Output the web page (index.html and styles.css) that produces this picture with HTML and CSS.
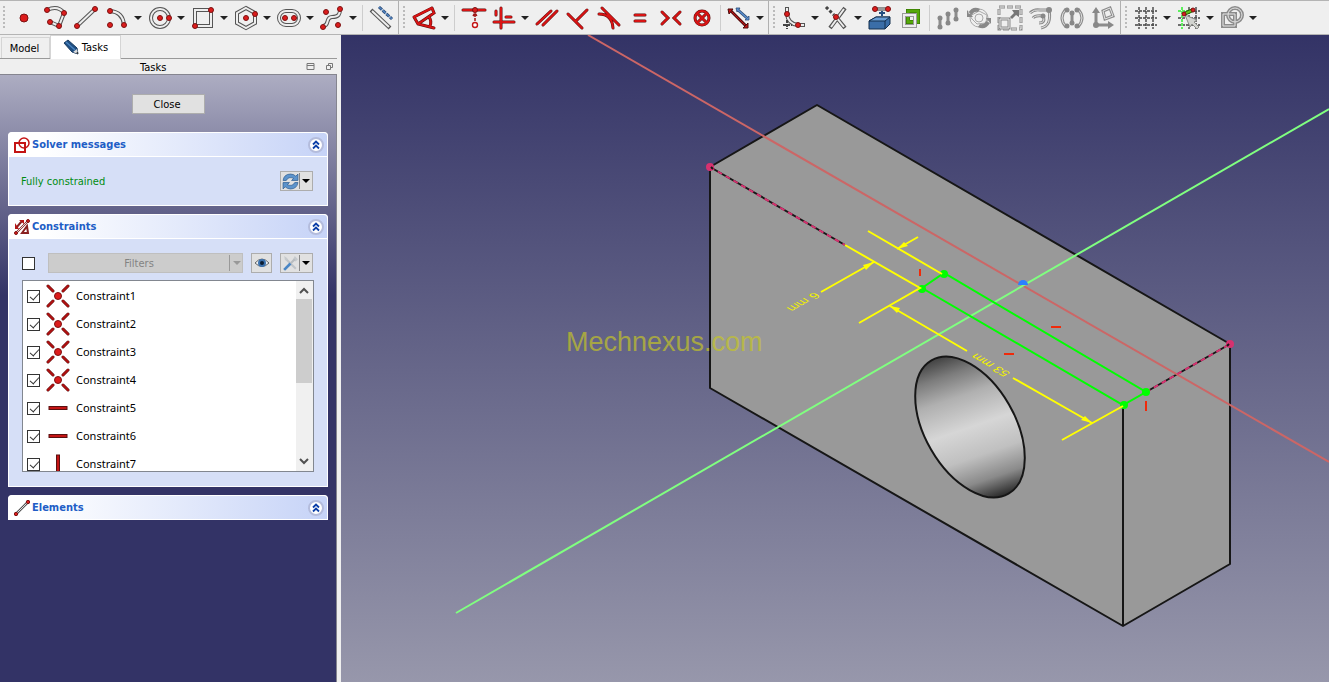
FILE: index.html
```
<!DOCTYPE html>
<html lang="en">
<head>
<meta charset="utf-8">
<title>Sketcher</title>
<link rel="stylesheet" href="styles.css">
</head>
<body>
<svg class="defs" aria-hidden="true">
  <defs>
    <symbol id="collapse" viewBox="0 0 16 16"><circle cx="8" cy="8" r="7" fill="#fff" stroke="#b4bcdc" stroke-width="2"/><path d="M5 7.500L8 4.500L11 7.500M5 11.500L8 8.500L11 11.500" fill="none" stroke="#0c3fa8" stroke-width="1.800"/></symbol>
    <symbol id="coincident" viewBox="0 0 24 24"><g class="k3"><path d="M2 2L7 7M22 2L17 7M2 22L7 17M22 22L17 17"/></g><g class="r2 deep"><path d="M2 2L7 7M22 2L17 7M2 22L7 17M22 22L17 17"/></g><circle class="dot" cx="12" cy="12" r="3.500"/></symbol>
    <symbol id="horizontal" viewBox="0 0 24 24"><rect x="3" y="10.500" width="18" height="3" fill="#c41414" stroke="#5b1010"/></symbol>
    <symbol id="vertical" viewBox="0 0 24 24"><rect x="10.500" y="3" width="3" height="18" fill="#c41414" stroke="#5b1010"/></symbol>
    <symbol id="grid-lines" viewBox="0 0 24 24"><path d="M5 1V23M12 1V23M19 1V23M1 5H23M1 12H23M1 19H23" fill="none" stroke="#444" stroke-width="1.400" stroke-dasharray="3 1"/></symbol>
  </defs>
</svg>
<div class="app">
  <header class="toolbars">
    <div class="bar" role="toolbar" aria-label="Geometries">
      <span class="grip"></span>
      <button class="tool" aria-label="Point"><svg viewBox="0 0 24 24"><circle class="dot" cx="12" cy="12" r="4"/></svg></button>
      <button class="tool" aria-label="Polyline"><svg viewBox="0 0 24 24"><path class="k4" d="M4 4Q15 -1 21 7L16 20L7 16"/><path class="w2" d="M4 4Q15 -1 21 7L16 20L7 16"/><g class="dot"><circle cx="4" cy="4" r="2.500"/><circle cx="21" cy="7" r="2.500"/><circle cx="16" cy="20" r="2.500"/><circle cx="7" cy="16" r="2.500"/></g></svg></button>
      <button class="tool" aria-label="Line"><svg viewBox="0 0 24 24"><path class="k4" d="M3 20L21 3"/><path class="w2" d="M3 20L21 3"/><g class="dot"><circle cx="3" cy="20" r="2.500"/><circle cx="21" cy="3" r="2.500"/></g></svg></button>
      <button class="tool drop" aria-label="Arc"><svg viewBox="0 0 24 24"><path class="k4" d="M5 5Q18 6 19 19"/><path class="w2" d="M5 5Q18 6 19 19"/><g class="dot"><circle cx="5" cy="5" r="2.500"/><circle cx="19" cy="19" r="2.500"/><circle cx="5" cy="19" r="2.500"/></g></svg></button>
      <button class="tool drop" aria-label="Circle"><svg viewBox="0 0 24 24"><circle class="k4" cx="12" cy="12" r="9"/><circle class="w2" cx="12" cy="12" r="9"/><g class="dot"><circle cx="12" cy="12" r="2.500"/><circle cx="21" cy="12" r="2.500"/></g></svg></button>
      <button class="tool drop" aria-label="Rectangle"><svg viewBox="0 0 24 24"><path class="k4" d="M4 4H20V20H4Z"/><path class="w2" d="M4 4H20V20H4Z"/><g class="dot"><circle cx="20" cy="4" r="2.500"/><circle cx="4" cy="20" r="2.500"/></g></svg></button>
      <button class="tool drop" aria-label="Polygon"><svg viewBox="0 0 24 24"><path class="k4" d="M12 2L21 7V17L12 22L3 17V7Z"/><path class="w2" d="M12 2L21 7V17L12 22L3 17V7Z"/><g class="dot"><circle cx="12" cy="12" r="2.500"/><circle cx="21" cy="8" r="2.500"/></g></svg></button>
      <button class="tool drop" aria-label="Slot"><svg viewBox="0 0 24 24"><rect class="k4" x="2" y="5" width="20" height="14" rx="7"/><rect class="w2" x="2" y="5" width="20" height="14" rx="7"/><g class="dot"><circle cx="8" cy="12" r="2.500"/><circle cx="17" cy="12" r="2.500"/></g></svg></button>
      <button class="tool drop" aria-label="B-spline"><svg viewBox="0 0 24 24"><path class="k4" d="M3 20C10 20 5 11 12 11S20 8 20 3"/><path class="w2" d="M3 20C10 20 5 11 12 11S20 8 20 3"/><g class="dot"><circle cx="6" cy="6" r="2.500"/><circle cx="20" cy="3" r="2.500"/><circle cx="3" cy="21" r="2.500"/><circle cx="18" cy="19" r="2.500"/></g></svg></button>
      <span class="sep"></span>
      <button class="tool" aria-label="Toggle construction"><svg viewBox="0 0 24 24"><path class="k4" d="M2 4L21 22"/><path class="w2" d="M3 5L20 21"/><path d="M10 1L23 13" fill="none" stroke="#2c4a74" stroke-width="3" stroke-dasharray="4 1"/><path d="M10 1L23 13" fill="none" stroke="#4f81bd" stroke-width="1.500" stroke-dasharray="4 1"/></svg></button>
    </div>
    <div class="bar" role="toolbar" aria-label="Constraints">
      <span class="grip"></span>
      <button class="tool drop" aria-label="Dimension"><svg viewBox="0 0 24 24"><g class="k3"><path d="M2 11L20 2M2 11L6 18L22 22M20 2L22 7L6 18M17 11Q20 15 18 20"/></g><g class="r2"><path d="M2 11L20 2M2 11L6 18L22 22M20 2L22 7L6 18M17 11Q20 15 18 20"/></g></svg></button>
      <span class="sep"></span>
      <button class="tool" aria-label="Lock"><svg viewBox="0 0 24 24"><path class="k3" d="M2 4H24"/><path class="r2" d="M2 4H24"/><circle class="dot" cx="14" cy="4" r="2.500"/><path d="M14 8V15M12 10L14 7L16 10" fill="none" stroke="#a01515" stroke-dasharray="3 1" stroke-width="1.500"/><circle cx="14" cy="19" r="2.500" fill="#fff" stroke="#c41414" stroke-width="1.400"/></svg></button>
      <button class="tool drop" aria-label="Horizontal or vertical"><svg viewBox="0 0 24 24"><g class="k3"><path d="M9 2V22M2 16H22M4 5V9M14 11H19"/></g><g class="r2"><path d="M9 2V22M2 16H22M4 5V9M14 11H19"/></g></svg></button>
      <button class="tool" aria-label="Parallel"><svg viewBox="0 0 24 24"><g class="k3"><path d="M2 18L16 5M8 19L22 5"/></g><g class="r2"><path d="M2 18L16 5M8 19L22 5"/></g></svg></button>
      <button class="tool" aria-label="Perpendicular"><svg viewBox="0 0 24 24"><g class="k3"><path d="M2 8L16 22M10 15L21 4"/></g><g class="r2"><path d="M2 8L16 22M10 15L21 4"/></g></svg></button>
      <button class="tool" aria-label="Tangent"><svg viewBox="0 0 24 24"><g class="k3"><path d="M5 2L22 19M2 8Q15 8 16 22"/></g><g class="r2"><path d="M5 2L22 19M2 8Q15 8 16 22"/></g></svg></button>
      <button class="tool" aria-label="Equal"><svg viewBox="0 0 24 24"><g class="k3"><path d="M7 9H17M7 15H17"/></g><g class="r2"><path d="M7 9H17M7 15H17"/></g></svg></button>
      <button class="tool" aria-label="Symmetric"><svg viewBox="0 0 24 24"><g class="k3"><path d="M3 6L9 12L3 18M21 6L15 12L21 18"/></g><g class="r2"><path d="M3 6L9 12L3 18M21 6L15 12L21 18"/></g></svg></button>
      <button class="tool" aria-label="Block"><svg viewBox="0 0 24 24"><g class="k3"><circle cx="12" cy="12" r="7"/><path d="M8 8L16 16M16 8L8 16"/></g><g class="r2"><circle cx="12" cy="12" r="7"/><path d="M8 8L16 16M16 8L8 16"/></g></svg></button>
      <span class="sep"></span>
      <button class="tool drop" aria-label="Toggle driving"><svg viewBox="0 0 24 24"><path d="M3 4L20 21" stroke="#5a0c0c" stroke-width="3"/><path d="M3 4L20 21" stroke="#c41414"/><path d="M1 3H6L2 8ZM21 22V17L16 22Z" fill="#c41414" stroke="#4a0c0c"/><path d="M11 4L20 12" fill="none" stroke="#2c4a74" stroke-width="3"/><path d="M9 2H13L10 6ZM22 14V10L18 14Z" fill="#5b92d4" stroke="#2c4a74" stroke-width=".8"/><path d="M11 4L20 12" fill="none" stroke="#5b92d4" stroke-width="1.200"/></svg></button>
    </div>
    <div class="bar" role="toolbar" aria-label="Sketch tools">
      <span class="grip"></span>
      <button class="tool drop" aria-label="Fillet"><svg viewBox="0 0 24 24"><path class="k4" d="M5 1V8Q6 18 16 19H23"/><path class="w2" d="M5 2V8Q6 18 16 19H22"/><path d="M5 14V23M1 19H10" stroke="#444" stroke-width="2" stroke-dasharray="3 1"/><g class="dot"><circle cx="5" cy="8" r="2.500"/><circle cx="16" cy="19" r="2.500"/></g></svg></button>
      <button class="tool drop" aria-label="Trim"><svg viewBox="0 0 24 24"><g class="k4"><path d="M20 2L5 22M11 11L20 22"/></g><g class="w2"><path d="M19 3L6 21M11 11L19 21"/></g><path d="M1 1L9 9" stroke="#444" stroke-width="3" stroke-dasharray="3 2"/><circle class="dot" cx="11" cy="11" r="2.500"/></svg></button>
      <button class="tool" aria-label="External geometry"><svg viewBox="0 0 24 24"><path d="M1 15L8 11H22V18L17 23H1Z" fill="#3a6ea8" stroke="#15304f"/><path d="M1 15L8 11H22L17 15Z" fill="#6a9fd6" stroke="#15304f"/><path d="M17 15V23" stroke="#15304f"/><path d="M7 3H20" stroke="#333" stroke-width="3"/><path d="M7 3H20" stroke="#fff"/><path d="M14 5V10M11 7H17" stroke="#244f80" stroke-width="2"/><g class="dot"><circle cx="7" cy="3" r="2.500"/><circle cx="20" cy="3" r="2.500"/></g></svg></button>
      <button class="tool" aria-label="Carbon copy"><svg viewBox="0 0 24 24"><path d="M9 5H19V16H9Z" fill="none" stroke="#2e6800" stroke-width="4"/><path d="M9 5H19V16H9Z" fill="none" stroke="#55a80a" stroke-width="3"/><path d="M5 9H16V20H5Z" fill="none" stroke="#999" stroke-width="4"/><path d="M5 9H16V20H5Z" fill="none" stroke="#eee" stroke-width="2"/></svg></button>
      <span class="sep"></span>
      <button class="tool" aria-label="Move" disabled><svg viewBox="0 0 24 24"><g class="g3"><path d="M4 11V20M12 7V16M20 3V12"/></g><g class="gd"><circle cx="4" cy="12" r="2.500"/><circle cx="4" cy="21" r="2.500"/><circle cx="12" cy="8" r="2.500"/><circle cx="12" cy="17" r="2.500"/><circle cx="20" cy="4" r="2.500"/><circle cx="20" cy="13" r="2.500"/></g></svg></button>
      <button class="tool" aria-label="Rotate" disabled><svg viewBox="0 0 24 24"><g class="g1"><circle cx="12" cy="12" r="9"/><circle cx="12" cy="12" r="4"/><path d="M3 10L12 5L20 9L19 17L10 18L5 13Z"/></g><path d="M1 7Q6 -1 13 3L11 6Q7 5 5 9ZM23 17Q18 25 11 21L13 18Q17 19 19 15ZM19 12H24V18ZM0 4V11H6Z" fill="#888"/></svg></button>
      <button class="tool" aria-label="Scale" disabled><svg viewBox="0 0 24 24"><path d="M1 1H23V23H1Z" fill="none" stroke="#8c8c8c" stroke-width="3" stroke-dasharray="6 2"/><path d="M1 1H23V23H1Z" fill="none" stroke="#efefef" stroke-dasharray="5 3" stroke-dashoffset="-.5"/><path class="g3" d="M2 13H11V22H2Z"/><path class="gl" d="M2 13H11V22H2Z"/><path d="M12 11L16 7L14 4H21V11L18 9L14 13Z" fill="#777"/></svg></button>
      <button class="tool" aria-label="Offset" disabled><svg viewBox="0 0 24 24"><g class="g3"><path d="M1 7Q5 3 11 4H20Q23 20 12 22M4 12Q6 9 14 10Q17 17 10 17"/></g><g class="gl"><path d="M1 7Q5 3 11 4H20Q23 20 12 22M4 12Q6 9 14 10Q17 17 10 17"/></g><g class="gd"><circle cx="20" cy="4" r="3"/><circle cx="14" cy="10" r="2.500"/></g></svg></button>
      <button class="tool" aria-label="Symmetry" disabled><svg viewBox="0 0 24 24"><g class="g3"><path d="M6 3Q-2 12 6 21M18 3Q26 12 18 21M12 5V18"/></g><g class="gl"><path d="M6 3Q-2 12 6 21M18 3Q26 12 18 21"/></g><g class="gd"><circle cx="7" cy="4" r="2.500"/><circle cx="7" cy="20" r="2.500"/><circle cx="17" cy="4" r="2.500"/><circle cx="17" cy="20" r="2.500"/><circle cx="12" cy="7" r="2.500"/><circle cx="12" cy="17" r="2.500"/></g></svg></button>
      <button class="tool" aria-label="Remove alignment" disabled><svg viewBox="0 0 24 24"><path class="g3" d="M5 5V19H19"/><path d="M5 1L9 7H1ZM23 19L17 15V23Z" fill="#888"/><circle class="gd" cx="5" cy="19" r="3"/><path class="g3" d="M12 5L19 2L22 10L14 13Z"/><path class="gl" d="M12 5L19 2L22 10L14 13Z"/></svg></button>
    </div>
    <div class="bar last" role="toolbar" aria-label="Edit tools">
      <span class="grip"></span>
      <button class="tool drop" aria-label="Grid"><svg viewBox="0 0 24 24"><use href="#grid-lines"/></svg></button>
      <button class="tool drop" aria-label="Snap"><svg viewBox="0 0 24 24"><use href="#grid-lines"/><path d="M5 1V23M1 5H10" stroke="#5df05d" stroke-width="2" stroke-dasharray="3 1"/><path d="M7 8L16 4" stroke="#1f5f00" stroke-width="4"/><path d="M7 8L16 4" stroke="#62c31c" stroke-width="2"/><path d="M8 9L20 14L17 16L22 21L20 23L15 18L13 21Z" fill="#d2d4d0" stroke="#8b8d88"/><g class="dot"><circle cx="7" cy="8" r="2"/><circle cx="16" cy="4" r="2"/></g></svg></button>
      <button class="tool drop" aria-label="Rendering order"><svg viewBox="0 0 24 24"><g class="g4"><path d="M3 8H15V20H3Z"/><circle cx="15" cy="9" r="7"/></g><g class="gl"><path d="M3 8H15V20H3Z"/><circle cx="15" cy="9" r="7"/></g></svg></button>
    </div>
  </header>
  <div class="workspace">
    <aside class="side">
      <div class="tabs" role="tablist">
        <button class="tab" role="tab" aria-selected="false">Model</button>
        <button class="tab active" role="tab" aria-selected="true"><svg class="pencil" viewBox="0 0 16 16"><path d="M1 4L5 1L14 9L15 15L9 13Z" fill="#1f4e82" stroke="#173b62"/><path d="M3 3L12 11" stroke="#4a84c0" stroke-width="1.500"/><path d="M10 13L14 10L15 15Z" fill="#ddd"/><path d="M13 14L15 13V15Z" fill="#111"/></svg>Tasks</button>
      </div>
      <div class="dock-title"><h1>Tasks</h1>
        <div class="dock-buttons">
          <button aria-label="Shade"><svg viewBox="0 0 9 9"><path d="M1 1.500H8V7.500H1ZM1 3.500H8" fill="none" stroke="#777"/></svg></button>
          <button aria-label="Float"><svg viewBox="0 0 9 9"><path d="M3.500 3V1.500H7.500V5.500H6M1.500 3.500H5.500V7.500H1.500Z" fill="none" stroke="#777"/></svg></button>
        </div>
      </div>
      <div class="tasks">
        <button class="close">Close</button>
        <section class="box">
          <h2><svg viewBox="0 0 16 16"><path d="M1 6H11V15H1Z" fill="none" stroke="#c41414" stroke-width="2"/><circle cx="10" cy="6" r="5" fill="none" stroke="#c41414" stroke-width="1.500"/></svg>Solver messages<button class="fold" aria-label="Collapse"><svg><use href="#collapse"/></svg></button></h2>
          <div class="body solver">
            <p>Fully constrained</p>
            <button class="split" aria-label="Refresh"><svg viewBox="0 0 16 16"><path d="M1 7Q2 1 8 1Q11 1 13 3L15 1V7H9L11 5Q6 3 4 7ZM15 9Q14 15 8 15Q5 15 3 13L1 15V9H7L5 11Q10 13 12 9Z" fill="#5d94cc" stroke="#2f5f92" stroke-width=".7"/></svg><i></i></button>
          </div>
        </section>
        <section class="box">
          <h2><svg viewBox="0 0 16 16"><path d="M2 9L8 2M2 14L14 2M8 14L13 7L14 14Z" fill="none" stroke="#8a2020" stroke-width="2"/><path d="M2 14L14 2" fill="none" stroke="#ddd"/><path d="M1 4V10H5ZM5 1H10V5Z" fill="#b31515"/><circle class="dot" cx="2" cy="14" r="1.500"/><circle class="dot" cx="14" cy="2" r="1.500"/></svg>Constraints<button class="fold" aria-label="Collapse"><svg><use href="#collapse"/></svg></button></h2>
          <div class="body">
            <div class="filter-row">
              <input type="checkbox" class="check" aria-label="Enable filters">
              <button class="filters" disabled><span>Filters</span><i></i></button>
              <button class="eye" aria-label="Show or hide"><svg viewBox="0 0 16 16"><path d="M1 8Q8 0 15 8Q8 15 1 8Z" fill="#eef2f6" stroke="#666"/><circle cx="8" cy="8" r="4" fill="#3d72ad"/><circle cx="8" cy="8" r="2" fill="#0c1c30"/></svg></button>
              <button class="split" aria-label="Settings"><svg viewBox="0 0 16 16"><path d="M3 3L13 13" stroke="#c0c4c8" stroke-width="2"/><path d="M2 1L5 3V5L3 5ZM12 1L10 5L13 6L15 4" fill="#c5c9cc"/><path d="M12 4L8 8" stroke="#b8bcc0" stroke-width="2"/><path d="M2 14L8 8" stroke="#4a86c5" stroke-width="2.500"/></svg><i></i></button>
            </div>
            <div class="list">
              <ul>
                <li><label><input type="checkbox" class="check" checked><svg><use href="#coincident"/></svg>Constraint1</label></li>
                <li><label><input type="checkbox" class="check" checked><svg><use href="#coincident"/></svg>Constraint2</label></li>
                <li><label><input type="checkbox" class="check" checked><svg><use href="#coincident"/></svg>Constraint3</label></li>
                <li><label><input type="checkbox" class="check" checked><svg><use href="#coincident"/></svg>Constraint4</label></li>
                <li><label><input type="checkbox" class="check" checked><svg><use href="#horizontal"/></svg>Constraint5</label></li>
                <li><label><input type="checkbox" class="check" checked><svg><use href="#horizontal"/></svg>Constraint6</label></li>
                <li><label><input type="checkbox" class="check" checked><svg><use href="#vertical"/></svg>Constraint7</label></li>
              </ul>
              <div class="scroll" aria-hidden="true">
                <svg viewBox="0 0 16 17"><path d="M4 11L8 7L12 11" fill="none" stroke="#505050" stroke-width="2"/></svg>
                <span class="thumb"></span>
                <svg viewBox="0 0 16 17"><path d="M4 6L8 10L12 6" fill="none" stroke="#505050" stroke-width="2"/></svg>
              </div>
            </div>
          </div>
        </section>
        <section class="box">
          <h2><svg viewBox="0 0 16 16"><path d="M2 14L14 2" stroke="#555" stroke-width="2.500"/><path d="M2 14L14 2" stroke="#ddd"/><circle class="dot" cx="2" cy="14" r="1.700"/><circle class="dot" cx="14" cy="2" r="1.700"/></svg>Elements<button class="fold" aria-label="Collapse"><svg><use href="#collapse"/></svg></button></h2>
        </section>
      </div>
    </aside>
    <main class="view">
      <svg viewBox="341 35 988 647" preserveAspectRatio="xMidYMid slice" role="img" aria-label="Block with a sketch on its top face">
        <defs>
          <linearGradient id="bore" gradientUnits="userSpaceOnUse" x1="944" y1="358" x2="992" y2="498" gradientTransform="rotate(-60 970 427)">
            <stop offset="0" stop-color="#484848"/><stop offset=".12" stop-color="#7c7c7c"/><stop offset=".28" stop-color="#b0b0b0"/><stop offset=".5" stop-color="#d6d6d6"/><stop offset=".7" stop-color="#c0c0c0"/><stop offset=".87" stop-color="#8a8a8a"/><stop offset="1" stop-color="#303030"/>
          </linearGradient>
        </defs>
        <path d="M817 105L1230 344V564L1123 626L710 388V167Z" fill="#999"/>
        <g class="edge">
          <path d="M710 167L817 105L1230 344V564L1123 626L710 388V167L845 245M1123 405V626M1146 392L1230 344"/>
          <ellipse cx="970" cy="427" rx="77" ry="45" transform="rotate(60 970 427)" fill="url(#bore)"/>
        </g>
        <path d="M588 35L1329 462" stroke="#cc6666" stroke-width="2"/>
        <path d="M456 613L1329 109" stroke="#80ff80" stroke-width="2"/>
        <path d="M710 167L845 245M1146 392L1230 344" stroke="#d6316f" stroke-width="2" stroke-dasharray="5 4"/>
        <path d="M1018 285A5 5 0 0 1 1028 285Z" fill="#2b80ff"/>
        <circle cx="710" cy="167" r="4" fill="#d6316f"/><circle cx="1230" cy="344" r="4" fill="#d6316f"/>
        <path d="M711 167L713 169M1229 344L1227 346" stroke="#161616" stroke-width="2"/>
        <path d="M922 288L944 273L1146 392L1123 405Z" fill="none" stroke="#0f0" stroke-width="2"/>
        <g fill="#0f0"><circle cx="922" cy="289" r="4"/><circle cx="944" cy="274" r="4"/><circle cx="1146" cy="392" r="4"/><circle cx="1124" cy="405" r="4"/></g>
        <g fill="none" stroke="#ff0" stroke-width="2">
          <path d="M845 245L920 288L859 323M868 231L942 274M918 237L897 249M821 292L874 262M890 306L967 351M1013 378L1092 423M1123 406L1062 440"/>
        </g>
        <path d="M897 249L904 242L908 246ZM874 262L863 265L866 270ZM890 306L897 313L900 308ZM1092 423L1085 416L1081 420Z" fill="#ff0"/>
        <path d="M920 269V276M1051 327H1061M1004 354H1014M1146 401V411" stroke="#f02a0a" stroke-width="2"/>
        <text class="dim" transform="matrix(-.87 .5 -.8 -.46 814 292)">6 mm</text>
        <text class="dim" transform="matrix(-.87 -.5 .8 -.46 1011 373)">53 mm</text>
        <text class="mark" x="566" y="351">Mechnexus.com</text>
      </svg>
    </main>
  </div>
</div>
</body>
</html>
```
FILE: styles.css
```
* { box-sizing: border-box; }
body { margin: 0; font: 11px/14px "DejaVu Sans Condensed", "Noto Sans", sans-serif; color: #000; background: #efefef; }
button { font: inherit; color: inherit; margin: 0; padding: 0; border: 0; background: none; }
.defs { position: absolute; width: 0; height: 0; }
.app { display: flex; flex-direction: column; height: 100vh; overflow: hidden; }

/* toolbars */
.toolbars { display: flex; height: 35px; flex: none; border-top: 1px solid #b4b4b4; border-bottom: 1px solid #b4b4b4; background: #efefef; }
.bar { display: flex; align-items: center; padding-right: 2px; border-right: 1px solid #b0b0b0; }
.bar + .bar { padding-left: 1px; }
.bar.last { border-right: 0; }
.grip { width: 8px; height: 26px; background: repeating-linear-gradient(#bbb 0 2px, transparent 2px 4px) 3px 1px / 2px 24px no-repeat; }
.tool { display: flex; align-items: center; width: 31px; height: 31px; padding: 2px 4px; }
.tool svg { width: 24px; height: 24px; flex: none; overflow: visible; }
.drop { width: 43px; }
.drop::after { content: ""; margin-left: 5px; border: 4px solid transparent; border-top-color: #222; border-bottom: 0; flex: none; }
.sep { width: 1px; height: 26px; margin: 0 2px 0 3px; background: #cdcdcd; }

/* icon strokes */
.dot { fill: #dc1c1c; stroke: #7c1212; stroke-width: 1; }
.k4, .k3, .w2, .r2, .g1, .g3, .g4, .gl { fill: none; }
.k4 { stroke: #555; stroke-width: 4; }
.w2 { stroke: #eee; stroke-width: 2; }
.k3 { stroke: #5a0c0c; stroke-width: 3; stroke-linecap: round; }
.r2 { stroke: #d81414; stroke-width: 2; stroke-linecap: round; }
.deep { stroke: #b01212; }
.g1 { stroke: #aaa; stroke-width: 1; }
.g3 { stroke: #8c8c8c; stroke-width: 3; }
.g4 { stroke: #8c8c8c; stroke-width: 4; }
.gl { stroke: #e4e4e4; stroke-width: 1; }
.gd { fill: #888; }

.workspace { display: flex; flex: 1; min-height: 0; }
.side { display: flex; flex-direction: column; width: 341px; flex: none; padding-right: 4px; }

/* dock header */
.tabs { display: flex; align-items: flex-end; height: 24px; border-bottom: 1px solid #999; padding-left: 1px; }
.tab { display: flex; align-items: center; justify-content: center; height: 21px; width: 49px; padding: 1px 2px 0 0; border: 1px solid #d5d5d5; border-bottom: 0; }
.tab.active { width: 71px; height: 24px; margin-bottom: -1px; padding-right: 0; gap: 3px; background: #fff; }
.pencil { width: 16px; height: 16px; margin-bottom: 3px; }
.dock-title { display: flex; align-items: center; height: 16px; padding-left: 140px; border-bottom: 1px solid #85858f; }
h1 { flex: 1; margin: 0; padding-top: 2px; font-size: 11px; font-weight: normal; }
.dock-buttons { display: flex; gap: 10px; padding-right: 3px; }
.dock-buttons svg { display: block; width: 9px; height: 9px; }

/* task panel */
.tasks { flex: 1; display: flex; flex-direction: column; gap: 8px; padding: 19px 8px 0; border-right: 1px solid #85858f; background: linear-gradient(#adadc2, #333366 220px); }
.close { align-self: center; width: 73px; height: 20px; margin-bottom: 10px; padding: 1px 2px 0 0; border: 1px solid #adadad; background: #e1e1e1; }
.box { border-radius: 4px 4px 0 0; background: #fff; }
h2 { display: flex; align-items: center; gap: 2px; height: 25px; margin: 0; padding: 0 3px 0 5px; border: 1px solid #fff; border-radius: 4px 4px 0 0; font-size: 11px; line-height: 16px; font-weight: bold; color: #215dc6; background: linear-gradient(90deg, #fff 10%, #c6d3f7); }
h2 > svg { width: 16px; height: 16px; }
.fold { margin-left: auto; }
.fold svg { display: block; width: 16px; height: 16px; }
.body { padding: 14px 13px; border: 1px solid #fff; border-top: 0; background: #d6dff7; }
.solver { display: flex; align-items: center; justify-content: space-between; height: 49px; padding: 0 14px 0 12px; }
.solver p { margin: 0; padding-top: 2px; color: #008c10; }
.split, .eye { display: flex; align-items: center; height: 20px; border: 1px solid #adadad; background: #e1e1e1; }
.split { width: 33px; padding-left: 1px; }
.split svg { width: 17px; height: 17px; }
.split i { display: flex; align-items: center; height: 16px; padding-left: 2px; border-left: 1px solid #888; }
.split i::after, .filters i::after { content: ""; border: 4px solid transparent; border-top-color: #000; border-bottom: 0; }
.eye { width: 21px; justify-content: center; margin-left: 8px; }
.eye svg { width: 16px; height: 16px; }
.eye + .split { margin: 0 1px 0 8px; }
.filter-row { display: flex; align-items: center; }
.filters { display: flex; align-items: center; flex: 1; height: 20px; margin-left: 13px; border: 1px solid #bfbfbf; background: #ccc; color: #838383; }
.filters span { flex: 1; padding-top: 1px; }
.filters i { display: flex; align-items: center; height: 16px; padding: 0 1px 0 3px; border-left: 1px solid #999; }
.filters i::after { border-top-color: #999; }
.check { appearance: none; flex: none; width: 13px; height: 13px; margin: 0; border: 1px solid #333; background: #fff; }
.check:checked { position: relative; }
.check:checked::after { content: ""; position: absolute; left: 4px; top: 0; width: 4px; height: 8px; border: solid #333; border-width: 0 1px 1px 0; transform: rotate(42deg); }

.list { display: flex; height: 192px; margin-top: 7px; border: 1px solid #828790; background: #fff; overflow: hidden; }
ul { flex: 1; margin: 0; padding: 1px 0 0 4px; list-style: none; font-family: "Noto Sans", sans-serif; }
li label { display: flex; align-items: center; height: 28px; }
li svg { width: 24px; height: 24px; margin: 0 6px 0 6px; }
.scroll { display: flex; flex-direction: column; width: 17px; padding: 1px 1px 1px 0; background: #f0f0f0; }
.scroll svg { width: 16px; height: 17px; }
.thumb { height: 84px; margin-bottom: auto; background: #cdcdcd; }

/* 3D view */
.view { flex: 1; min-width: 0; background: linear-gradient(#333366, #9797ab); }
.view svg { display: block; width: 100%; height: 100%; }
.edge { fill: none; stroke: #161616; stroke-width: 2; stroke-linejoin: round; }
.dim { font: 13px "Liberation Sans", sans-serif; fill: #f0f000; }
.mark { font: 27px "Liberation Sans", sans-serif; fill: #c6c626; opacity: .68; }
```
